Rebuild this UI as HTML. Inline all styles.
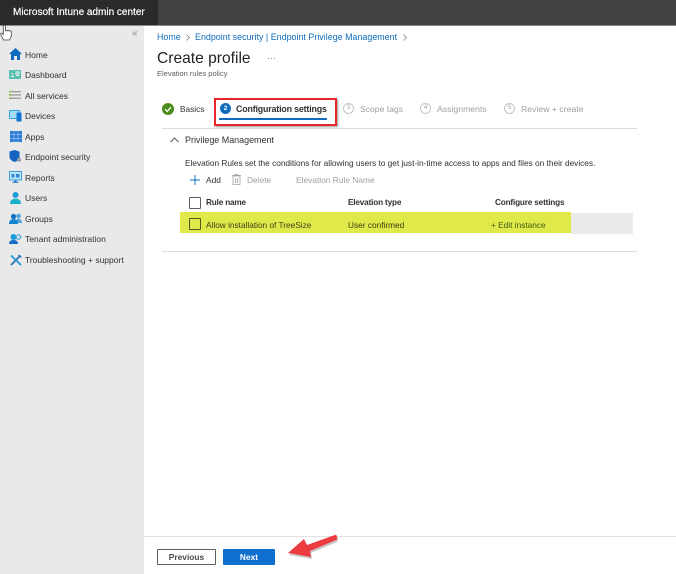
<!DOCTYPE html>
<html><head><meta charset="utf-8">
<style>
html,body{margin:0;padding:0}
body{width:676px;height:574px;position:relative;overflow:hidden;background:#fff;font-family:"Liberation Sans",sans-serif;color:#323130;filter:blur(.3px)}
.a{position:absolute;white-space:nowrap;line-height:12px}
.n{font-size:8.5px;left:25px;color:#323130}
.b{position:absolute}
svg{position:absolute;overflow:visible}
</style></head><body>
<div class="b" style="left:0;top:0;width:676px;height:25px;background:#434241"></div>
<div class="b" style="left:0;top:0;width:158px;height:25px;background:#2c2a29"></div>
<div class="b" style="left:0;top:25px;width:676px;height:1px;background:#8a8a88"></div>
<div class="a" style="left:13px;top:7px;font-size:10px;color:#fff;-webkit-text-stroke:.2px #fff">Microsoft Intune admin center</div>

<div class="b" style="left:0;top:26px;width:144px;height:548px;background:#e9e9e9"></div>
<div class="a" style="left:132px;top:28px;font-size:10px;color:#8a8886">«</div>

<svg style="left:0;top:25px" width="12" height="16" viewBox="0 0 12 16"><path d="M3.500 15L.8 9.500c-.5-1.300 1-1.800 1.700-.8l.8 1V1.300c0-1.500 2.200-1.500 2.200 0V6c0-1 2-1 2 0 0-.8 2-.8 2 .3 0-.6 1.800-.6 1.800.5v4.500L9.500 15z" fill="#fff" stroke="#444" stroke-width=".8" stroke-linejoin="round"/></svg>

<!-- nav icons -->
<svg style="left:9px;top:48px" width="13" height="12" viewBox="0 0 13 12"><path d="M6.500 0L0 6h2v6h3V8h3v4h3V6h2z" fill="#0f6cbd"/></svg>
<svg style="left:9px;top:70px" width="12" height="9" viewBox="0 0 12 9"><rect width="12" height="9" fill="#5cbfb0"/><path d="M2 6.500h3M3 3l1 2M7 2h3v2H7zM7 5.500h3" stroke="#e6f5f2" stroke-width="1" fill="none"/></svg>
<svg style="left:9px;top:91px" width="12" height="8" viewBox="0 0 12 8"><rect y="0" width="12" height="1.300" fill="#9a9a98"/><rect y="3.300" width="12" height="1.300" fill="#9a9a98"/><rect y="6.600" width="12" height="1.300" fill="#9a9a98"/><rect y="0" width="2.500" height="1.300" fill="#7fba3a"/><rect y="3.300" width="2.500" height="1.300" fill="#7fba3a"/><rect y="6.600" width="2.500" height="1.300" fill="#7fba3a"/></svg>
<svg style="left:9px;top:110px" width="13" height="12" viewBox="0 0 13 12"><rect x="0.500" y="0.500" width="10" height="8" rx=".8" fill="#a6dcf5" stroke="#2e9fe0"/><rect x="7.500" y="2.500" width="5" height="9" rx=".6" fill="#1173d4"/></svg>
<svg style="left:10px;top:131px" width="12" height="11" viewBox="0 0 12 11"><rect width="12" height="11" fill="#2a7bd6"/><path d="M4 0v11M8 0v11M0 3.700h12M0 7.300h12" stroke="#9cc7f0" stroke-width=".7"/></svg>
<svg style="left:9px;top:150px" width="13" height="13" viewBox="0 0 13 13"><path d="M5 0L10 1.500V6.500C10 9.500 7.500 11 5 12C2.500 11 0 9.500 0 6.500V1.500z" fill="#1565c0" transform="translate(.5 0)"/><circle cx="10" cy="9.800" r="2" fill="#8a8f95"/><circle cx="10" cy="9.800" r=".7" fill="#e9e9e9"/></svg>
<svg style="left:9px;top:171px" width="13" height="12" viewBox="0 0 13 12"><rect x=".5" y=".5" width="12" height="8.500" fill="#bfe6f8" stroke="#3aa0dd"/><rect x="2.500" y="3" width="3" height="3.500" fill="#2b88d8"/><rect x="7" y="3" width="3.500" height="3.500" fill="#2b88d8"/><path d="M5.500 9.500h2v1.200h2v1h-6v-1h2z" fill="#0f6cbd"/></svg>
<svg style="left:10px;top:192px" width="11" height="12" viewBox="0 0 11 12"><circle cx="5.500" cy="3" r="3" fill="#1a9ad6"/><path d="M0 12C0 8 2.500 6.800 5.500 6.800S11 8 11 12z" fill="#18b2c9"/></svg>
<svg style="left:9px;top:213px" width="13" height="11" viewBox="0 0 13 11"><circle cx="9.500" cy="3" r="2.300" fill="#4aa5dd"/><path d="M6.500 10c0-3 1.300-4.300 3-4.300S13 7 13 10z" fill="#4aa5dd"/><circle cx="4.500" cy="3.500" r="2.600" fill="#1270c4"/><path d="M0 11c0-3.500 2-5 4.500-5S9 7.500 9 11z" fill="#1785d0"/></svg>
<svg style="left:9px;top:233px" width="13" height="12" viewBox="0 0 13 12"><circle cx="4.500" cy="4" r="3" fill="#1a9ad6"/><path d="M0 11c0-3 2-4 4.500-4S9 8 9 11z" fill="#1270c4"/><circle cx="9.500" cy="4" r="2.200" fill="none" stroke="#38a3e0" stroke-width="1.500" stroke-dasharray="1.500 .6"/></svg>
<svg style="left:10px;top:254px" width="12" height="12" viewBox="0 0 12 12"><path d="M1 11L10 2" stroke="#2a6fb0" stroke-width="1.800"/><path d="M1 1.500L11 11" stroke="#1a9ad6" stroke-width="1.800"/><path d="M8 .8a3 3 0 0 1 3.500 3.500L10 3 9 3.500z" fill="#2a6fb0"/></svg>

<div class="a n" style="top:49px">Home</div>
<div class="a n" style="top:69px">Dashboard</div>
<div class="a n" style="top:90px">All services</div>
<div class="a n" style="top:110px">Devices</div>
<div class="a n" style="top:131px">Apps</div>
<div class="a n" style="top:151px">Endpoint security</div>
<div class="a n" style="top:172px">Reports</div>
<div class="a n" style="top:192px">Users</div>
<div class="a n" style="top:213px">Groups</div>
<div class="a n" style="top:233px">Tenant administration</div>
<div class="a n" style="top:254px">Troubleshooting + support</div>

<!-- breadcrumb -->
<div class="a" style="left:157px;top:31px;font-size:8.900px;color:#0f6cbd">Home</div>
<svg style="left:186px;top:34px" width="4" height="7" viewBox="0 0 4 7"><path d="M.5.500l3 3-3 3" stroke="#8a8886" stroke-width=".8" fill="none"/></svg>
<div class="a" style="left:195px;top:31px;font-size:8.900px;letter-spacing:.02px;color:#0f6cbd">Endpoint security | Endpoint Privilege Management</div>
<svg style="left:403px;top:34px" width="4" height="7" viewBox="0 0 4 7"><path d="M.5.500l3 3-3 3" stroke="#8a8886" stroke-width=".8" fill="none"/></svg>

<div class="a" style="left:157px;top:50px;font-size:15.600px;line-height:18px;color:#252423">Create profile</div>
<div class="a" style="left:267px;top:52px;font-size:9px;color:#777">···</div>
<div class="a" style="left:157px;top:68px;font-size:7.500px;color:#605e5c">Elevation rules policy</div>

<!-- tabs -->
<svg style="left:162px;top:103px" width="12" height="12" viewBox="0 0 12 12"><circle cx="6" cy="6" r="6" fill="#4c8c1c"/><path d="M3 6.200l2.200 2.200L9 4.200" stroke="#fff" stroke-width="1.300" fill="none"/></svg>
<div class="a" style="left:180px;top:103px;font-size:8.300px;color:#323130">Basics</div>

<div class="b" style="left:214px;top:98px;width:119px;height:24px;border:2px solid #e8262c;box-shadow:1px 1px 2px rgba(0,0,0,.4)"></div>
<div class="b" style="left:220px;top:103px;width:11px;height:11px;border-radius:50%;background:#0f6cbd;color:#fff;font-size:6.500px;line-height:11px;text-align:center;font-weight:bold">2</div>
<div class="a" style="left:236px;top:103px;font-size:8.900px;font-weight:bold;color:#323130;letter-spacing:-.02em">Configuration settings</div>
<div class="b" style="left:219px;top:118px;width:108px;height:2px;background:#0f6cbd"></div>

<div class="b" style="left:343px;top:103px;width:9px;height:9px;border:1px solid #c8c6c4;border-radius:50%;color:#a19f9d;font-size:6px;line-height:9px;text-align:center">3</div>
<div class="a" style="left:360px;top:103px;font-size:8.600px;color:#a19f9d">Scope tags</div>
<div class="b" style="left:420px;top:103px;width:9px;height:9px;border:1px solid #c8c6c4;border-radius:50%;color:#a19f9d;font-size:6px;line-height:9px;text-align:center">4</div>
<div class="a" style="left:437px;top:103px;font-size:8.700px;color:#a19f9d">Assignments</div>
<div class="b" style="left:504px;top:103px;width:9px;height:9px;border:1px solid #c8c6c4;border-radius:50%;color:#a19f9d;font-size:6px;line-height:9px;text-align:center">5</div>
<div class="a" style="left:521px;top:103px;font-size:8.700px;color:#a19f9d">Review + create</div>

<div class="b" style="left:162px;top:128px;width:475px;height:1px;background:#dcdcdc"></div>

<!-- section -->
<svg style="left:170px;top:137px" width="9" height="6" viewBox="0 0 9 6"><path d="M.5 5L4.500 1l4 4" stroke="#605e5c" fill="none"/></svg>
<div class="a" style="left:185px;top:134px;font-size:8.950px;color:#323130">Privilege Management</div>
<div class="a" style="left:185px;top:157px;font-size:8.330px;letter-spacing:-.018px;color:#323130">Elevation Rules set the conditions for allowing users to get just-in-time access to apps and files on their devices.</div>

<svg style="left:190px;top:175px" width="10" height="10" viewBox="0 0 10 10"><path d="M5 0v10M0 5h10" stroke="#0f6cbd" stroke-width="1"/></svg>
<div class="a" style="left:206px;top:174px;font-size:8.400px;color:#323130">Add</div>
<svg style="left:232px;top:174px" width="9" height="11" viewBox="0 0 9 11"><path d="M1 2h7v8.500H1zM0 1.500h9M3 1.500V.5h3v1M3.500 4v5M5.500 4v5" stroke="#a19f9d" stroke-width=".8" fill="none"/></svg>
<div class="a" style="left:247px;top:174px;font-size:8.400px;color:#a19f9d">Delete</div>
<div class="a" style="left:296px;top:174px;font-size:8.400px;color:#a19f9d">Elevation Rule Name</div>

<div class="b" style="left:189px;top:197px;width:10px;height:10px;border:1px solid #605e5c;border-radius:1px"></div>
<div class="a" style="left:206px;top:197px;font-size:8.200px;font-weight:bold;color:#323130;letter-spacing:-.02em">Rule name</div>
<div class="a" style="left:348px;top:197px;font-size:8.200px;font-weight:bold;color:#323130;letter-spacing:-.02em">Elevation type</div>
<div class="a" style="left:495px;top:197px;font-size:8.200px;font-weight:bold;color:#323130;letter-spacing:-.02em">Configure settings</div>

<div class="b" style="left:571px;top:213px;width:62px;height:21px;background:#ebebe9"></div>
<div class="b" style="left:180px;top:212px;width:391px;height:21px;background:#dfe94a"></div>
<div class="b" style="left:189px;top:218px;width:10px;height:10px;border:1px solid #55571a;border-radius:1px"></div>
<div class="a" style="left:206px;top:219px;font-size:8.300px;letter-spacing:-.01px;color:#3c3e14">Allow installation of TreeSize</div>
<div class="a" style="left:348px;top:219px;font-size:8.300px;color:#3c3e14">User confirmed</div>
<div class="a" style="left:491px;top:219px;font-size:8.300px;color:#3f5a10">+ Edit instance</div>

<div class="b" style="left:162px;top:251px;width:475px;height:1px;background:#dcdcdc"></div>

<!-- footer -->
<div class="b" style="left:144px;top:536px;width:532px;height:1px;background:#e1e1e1"></div>
<div class="b" style="left:157px;top:549px;width:57px;height:14px;border:1px solid #605e5c;border-radius:1px;text-align:center;font-size:8.400px;line-height:14px;font-weight:bold;color:#4a4947">Previous</div>
<div class="b" style="left:223px;top:549px;width:52px;height:16px;background:#0f6fd0;border-radius:1px;text-align:center;font-size:8.400px;line-height:16px;font-weight:bold;color:#fff">Next</div>
<svg style="left:285px;top:530px" width="55" height="30" viewBox="0 0 55 30"><path d="M3 23L19 9l3 6L50 5c2-1 3 4 1 5L25 21l1 6z" fill="#000" opacity=".22" transform="translate(1 2)"/><path d="M3 23L19 9l3 6L50 5c2-1 3 4 1 5L25 21l1 6z" fill="#ec3b41"/></svg>
</body></html>
